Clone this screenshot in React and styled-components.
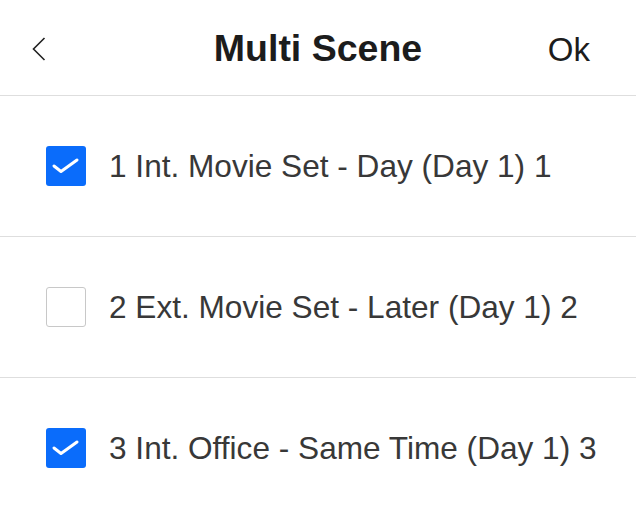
import React from "react";
import styled, { createGlobalStyle } from "styled-components";

const Global = createGlobalStyle`
  html, body { margin: 0; padding: 0; background: #fff; }
  body { font-family: "Liberation Sans", Arial, sans-serif; }
`;

const Screen = styled.div`
  width: 636px;
  height: 514px;
  overflow: hidden;
  background: #fff;
`;

const Header = styled.div`
  height: 95px;
  display: grid;
  grid-template-columns: 100px 1fr 100px;
  align-items: center;
  border-bottom: 1px solid #dedede;
`;

const Back = styled.button`
  background: none;
  border: 0;
  padding: 2px 0 0 32px;
  display: flex;
  align-items: center;
  height: 100%;
  cursor: pointer;
`;

const Title = styled.div`
  text-align: center;
  font-weight: bold;
  font-size: 37.5px;
  color: #1c1c1c;
  padding-top: 2px;
`;

const Ok = styled.div`
  text-align: right;
  padding-right: 46px;
  font-size: 33px;
  color: #1c1c1c;
  padding-top: 4px;
`;

const Row = styled.div`
  height: 140px;
  display: flex;
  align-items: center;
  gap: 23px;
  padding-left: 46px;
  border-bottom: 1px solid #dedede;
  &:last-child { border-bottom: 0; }
`;

const Box = styled.div`
  width: 40px;
  height: 40px;
  box-sizing: border-box;
  border-radius: 3px;
  flex: none;
  background: ${(p) => (p.$checked ? "#0a6cfb" : "#fff")};
  border: ${(p) => (p.$checked ? "0" : "1.5px solid #c8c8c8")};
  svg { display: block; }
`;

const Label = styled.div`
  font-size: 31.6px;
  color: #383838;
  white-space: nowrap;
`;

const scenes = [
  { text: "1 Int. Movie Set - Day (Day 1) 1", checked: true },
  { text: "2 Ext. Movie Set - Later (Day 1) 2", checked: false },
  { text: "3 Int. Office - Same Time (Day 1) 3", checked: true },
];

export default function App() {
  return (
    <Screen>
      <Global />
      <Header>
        <Back aria-label="back">
          <svg width="14" height="24" viewBox="0 0 14 24">
            <path d="M12.5 1 L1.5 12 L12.5 23" fill="none" stroke="#222" strokeWidth="1.6" />
          </svg>
        </Back>
        <Title>Multi Scene</Title>
        <Ok>Ok</Ok>
      </Header>
      {scenes.map((s) => (
        <Row key={s.text}>
          <Box $checked={s.checked}>
            {s.checked && (
              <svg width="40" height="40" viewBox="0 0 40 40">
                <path d="M8 20 L15 25.5 L31 14" fill="none" stroke="#fff" strokeWidth="3" strokeLinecap="round" strokeLinejoin="round" />
              </svg>
            )}
          </Box>
          <Label>{s.text}</Label>
        </Row>
      ))}
    </Screen>
  );
}
